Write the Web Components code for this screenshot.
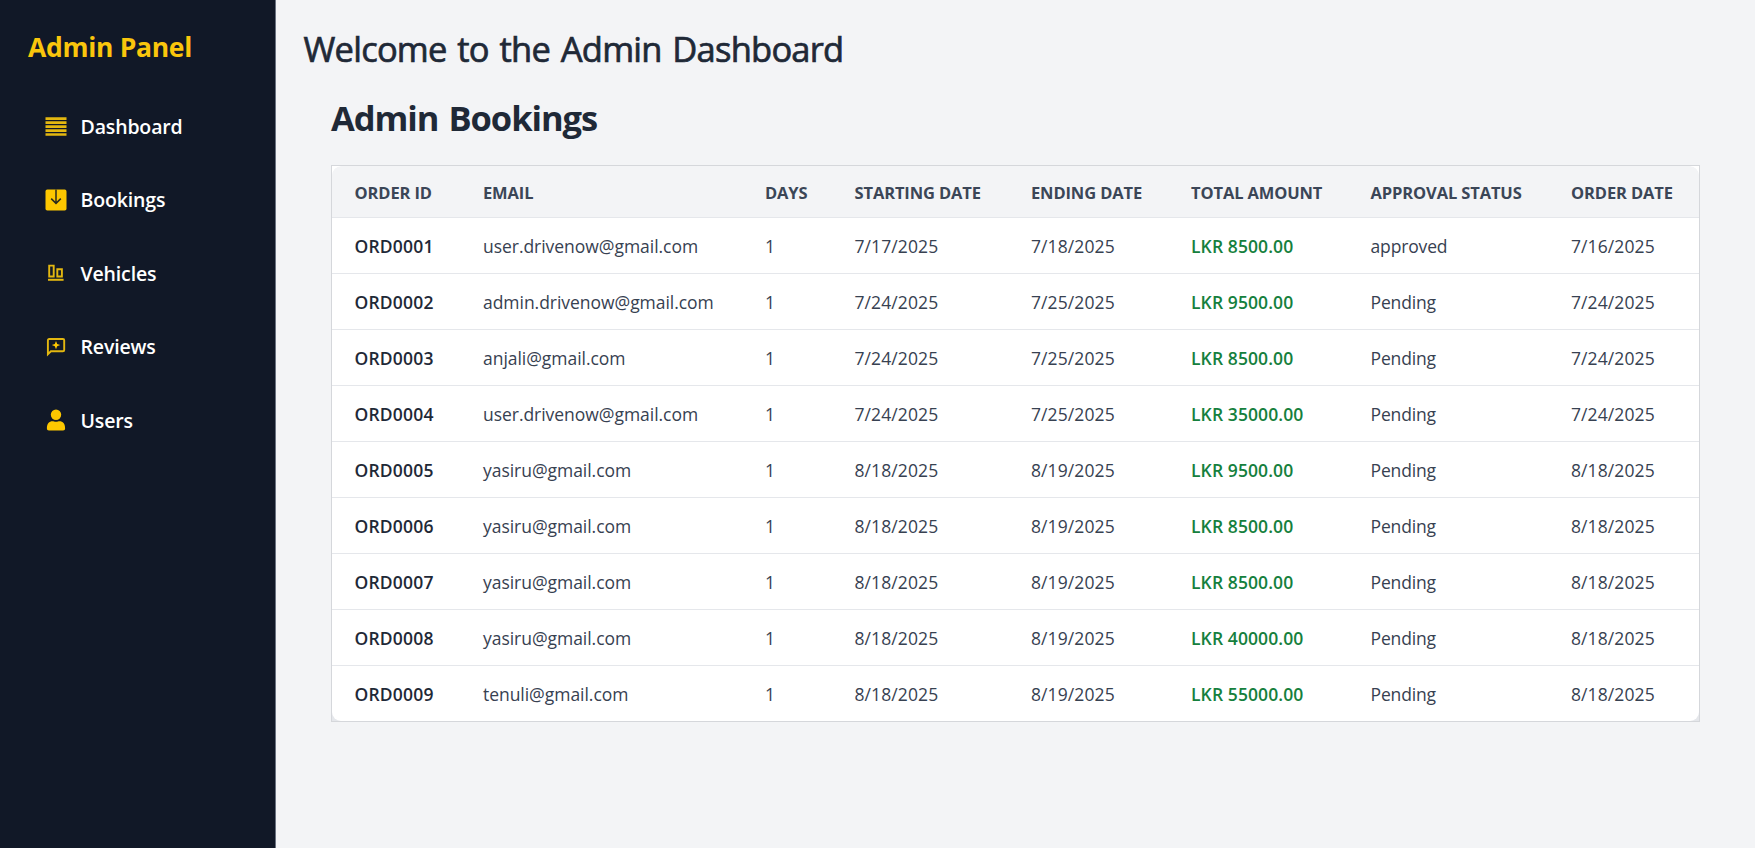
<!DOCTYPE html>
<html lang="en">
<head>
<meta charset="utf-8">
<title>Admin Dashboard</title>
<style>
  body { margin: 0; font-family: "Open Sans", "Noto Sans", sans-serif; background: #f3f4f6; }
</style>
</head>
<body>
<admin-app>
  <admin-sidebar slot="sidebar" heading="Admin Panel">
    <nav-item icon="lines">Dashboard</nav-item>
    <nav-item icon="inbox">Bookings</nav-item>
    <nav-item icon="bars">Vehicles</nav-item>
    <nav-item icon="review">Reviews</nav-item>
    <nav-item icon="user">Users</nav-item>
  </admin-sidebar>
  <page-title>Welcome to the Admin Dashboard</page-title>
  <bookings-panel>
    <span slot="title">Admin Bookings</span>
  </bookings-panel>
</admin-app>

<script>
const attach = (el, html) => { el.attachShadow({ mode: "open" }).innerHTML = html; };

customElements.define("admin-app", class extends HTMLElement {
  constructor() {
    super();
    attach(this, `<style>
      :host { display: flex; height: 100vh; overflow: hidden; }
      main { flex: 1; min-width: 0; padding: 24px 55px 0 27px; background: #f3f4f6; }
    </style><slot name="sidebar"></slot><main><slot></slot></main>`);
  }
});

customElements.define("admin-sidebar", class extends HTMLElement {
  constructor() {
    super();
    attach(this, `<style>
      :host { display: block; box-sizing: border-box; width: 276px; flex: none; background: #111827; border-right: 1px solid #6b7280; padding: 27px 27px 0; }
      h2 { margin: 0 0 39px; padding-left: 1px; font-size: 26.5px; line-height: 40px; font-weight: 700; letter-spacing: -0.3px; color: #fac60c; white-space: nowrap; }
      nav { display: flex; flex-direction: column; gap: 33.5px; padding-left: 18px; }
    </style><h2></h2><nav><slot></slot></nav>`);
    this.shadowRoot.querySelector("h2").textContent = this.getAttribute("heading");
  }
});

const ICONS = {
  lines: `<path fill="#e3b710" d="M.5 2.200h21v2.800h-21zM.5 6.200h21v2.800h-21zM.5 10.200h21v2.800h-21zM.5 14.200h21v2.800h-21zM.5 18.200h21v2.600h-21z"/>`,
  inbox: `<rect x=".5" y=".6" width="21" height="21" rx="1.8" fill="#fdc700"/><path d="M11 .6V14M6.200 9.600 11 14.400l4.800-4.800" fill="none" stroke="#2b2a1c" stroke-width="1.500"/>`,
  bars: `<path d="M4.200 3.600h4.500v10.900H4.200zM12.300 7.200h4.600v7.300h-4.600z" fill="none" stroke="#e3b710" stroke-width="1.900"/><path d="M3 16.800h15.600v2H3z" fill="#e3b710"/>`,
  review: `<path d="M2.900 18.200V4.300Q2.900 3 4.200 3h13.700Q19.200 3 19.200 4.300v9.700q0 1.300-1.300 1.300H5.900z" fill="none" stroke="#e3b710" stroke-width="1.900"/><path d="M11 5 12.200 7.900 15.200 9.100l-3 1.200L11 13.300l-1.200-3L6.800 9.100l3-1.200z" fill="#fdc700"/>`,
  user: `<circle cx="11" cy="5.700" r="5.200" fill="#fdc700"/><path d="M1.900 19.400c0-5 2.300-7.200 5.600-7.200 1.200 0 2 .6 3.500.6s2.300-.6 3.500-.6c3.300 0 5.600 2.200 5.600 7.200 0 1.300-.7 2-2 2H3.900c-1.300 0-2-.7-2-2z" fill="#fdc700"/>`
};

customElements.define("nav-item", class extends HTMLElement {
  constructor() {
    super();
    attach(this, `<style>
      :host { display: flex; align-items: center; gap: 13.5px; height: 40px; font-size: 19.5px; font-weight: 600; letter-spacing: -0.15px; color: #fff; white-space: nowrap; }
      svg { width: 22px; height: 22px; flex: none; }
    </style><svg viewBox="0 0 22 22" aria-hidden="true">${ICONS[this.getAttribute("icon")]}</svg><slot></slot>`);
  }
});

customElements.define("page-title", class extends HTMLElement {
  constructor() {
    super();
    attach(this, `<style>
      :host { display: block; }
      h1 { margin: 0; padding-left: 0.5px; font-size: 34.5px; line-height: 50px; font-weight: 400; letter-spacing: -0.77px; word-spacing: 2.5px; color: #1f2937; -webkit-text-stroke: 0.7px #1f2937; white-space: nowrap; }
    </style><h1><slot></slot></h1>`);
  }
});

const COLUMNS = "128.5px 282px 89.5px 176.5px 160px 179.5px 200.5px 1fr";

customElements.define("booking-head", class extends HTMLElement {
  constructor() {
    super();
    attach(this, `<style>
      :host { display: grid; grid-template-columns: ${COLUMNS}; align-items: center; box-sizing: border-box; height: 52px; padding: 1px 0 0 22.5px; background: #f3f4f6; border-bottom: 1px solid #e5e7eb; border-radius: 9px 9px 0 0; font-size: 16.5px; font-weight: 700; letter-spacing: -0.12px; color: #3b4657; white-space: nowrap; }
    </style>${["Order ID", "Email", "Days", "Starting Date", "Ending Date", "Total Amount", "Approval Status", "Order Date"].map(t => `<span>${t.toUpperCase()}</span>`).join("")}`);
  }
});

customElements.define("booking-row", class extends HTMLElement {
  set data(cells) {
    attach(this, `<style>
      :host { display: grid; grid-template-columns: ${COLUMNS}; align-items: center; box-sizing: border-box; height: 56px; padding-left: 22.5px; border-bottom: 1px solid #e5e7eb; font-size: 17.5px; letter-spacing: -0.15px; color: #374151; white-space: nowrap; }
      :host(:last-of-type) { height: 55px; border-bottom: 0; }
      .id { font-weight: 600; letter-spacing: 0.18px; color: #1f2937; }
      .email { letter-spacing: -0.04px; }
      .date { letter-spacing: 0.1px; }
      .total { font-weight: 600; letter-spacing: 0.1px; color: #15803d; }
    </style>${cells.map((c, i) => `<span class="${["id", "email", "days", "date", "date", "total", "status", "date"][i]}">${c}</span>`).join("")}`);
  }
});

const BOOKINGS = [
  ["user.drivenow", "7/17/2025", "7/18/2025", "8500", "approved", "7/16/2025"],
  ["admin.drivenow", "7/24/2025", "7/25/2025", "9500", "Pending", "7/24/2025"],
  ["anjali", "7/24/2025", "7/25/2025", "8500", "Pending", "7/24/2025"],
  ["user.drivenow", "7/24/2025", "7/25/2025", "35000", "Pending", "7/24/2025"],
  ["yasiru", "8/18/2025", "8/19/2025", "9500", "Pending", "8/18/2025"],
  ["yasiru", "8/18/2025", "8/19/2025", "8500", "Pending", "8/18/2025"],
  ["yasiru", "8/18/2025", "8/19/2025", "8500", "Pending", "8/18/2025"],
  ["yasiru", "8/18/2025", "8/19/2025", "40000", "Pending", "8/18/2025"],
  ["tenuli", "8/18/2025", "8/19/2025", "55000", "Pending", "8/18/2025"]
];

customElements.define("bookings-panel", class extends HTMLElement {
  constructor() {
    super();
    attach(this, `<style>
      :host { display: block; padding: 19px 0 0 28px; }
      h2 { margin: 0 0 22px; font-size: 34.5px; line-height: 50px; font-weight: 700; letter-spacing: -1.05px; word-spacing: 2px; color: #1f2937; white-space: nowrap; }
      .frame { border: 1px solid #d5d7db; background: linear-gradient(#fff 50%, #e5e7eb 50%); }
      .table { background: #fff; border-radius: 9px; overflow: hidden; }
    </style><h2><slot name="title"></slot></h2><div class="frame"><div class="table"><booking-head></booking-head></div></div>`);
    const table = this.shadowRoot.querySelector(".table");
    BOOKINGS.forEach(([user, start, end, amount, status, ordered], i) => {
      const row = document.createElement("booking-row");
      row.data = [`ORD000${i + 1}`, `${user}@gmail.com`, "1", start, end, `LKR ${amount}.00`, status, ordered];
      table.append(row);
    });
  }
});
</script>
</body>
</html>
